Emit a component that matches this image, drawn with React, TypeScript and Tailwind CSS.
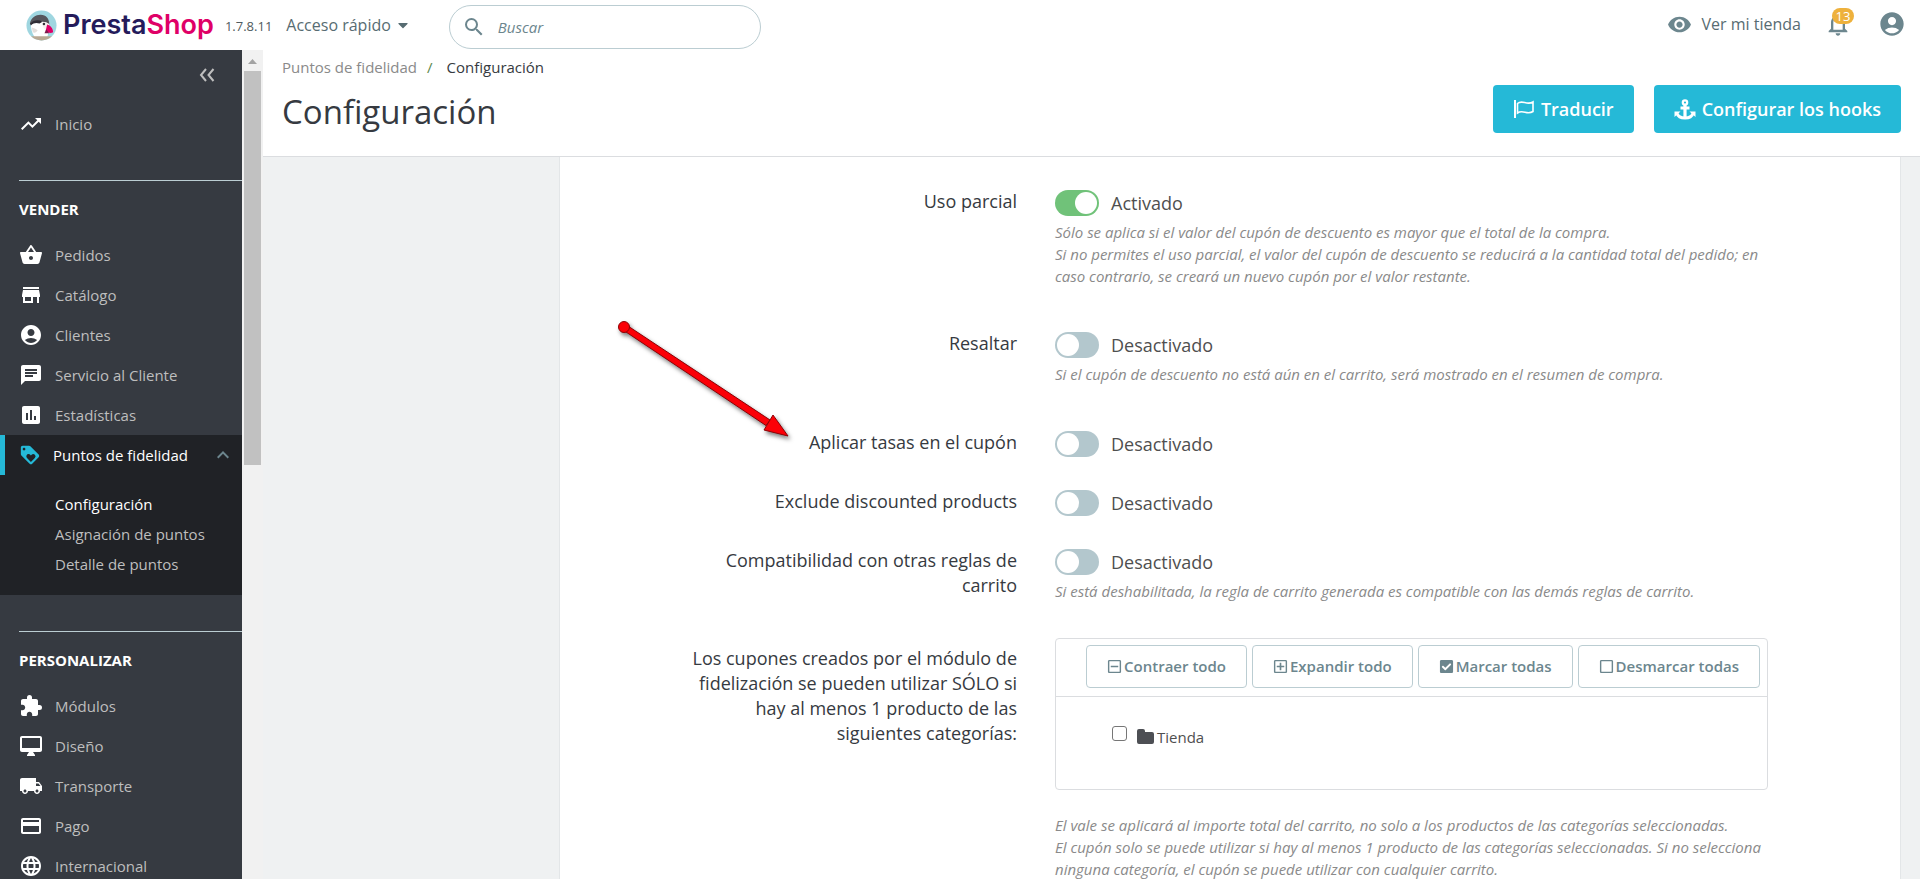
import React from 'react';
import {
  MdTrendingUp,
  MdShoppingBasket,
  MdStore,
  MdAccountCircle,
  MdChat,
  MdAssessment,
  MdLoyalty,
  MdExtension,
  MdLocalShipping,
  MdCreditCard,
  MdLanguage,
  MdSearch,
  MdVisibility,
  MdNotificationsNone,
  MdKeyboardArrowUp,
} from 'react-icons/md';
import { FaCaretDown, FaRegMinusSquare, FaRegPlusSquare, FaCheckSquare, FaRegSquare } from 'react-icons/fa';

const DesktopIcon = ({ className }: { className?: string }) => (
  <svg viewBox="0 0 24 24" className={className} fill="currentColor">
    <path d="M21 2H3c-1.100 0-2 .9-2 2v12c0 1.100.9 2 2 2h7l-2 3v1h8v-1l-2-3h7c1.100 0 2-.9 2-2V4c0-1.100-.9-2-2-2zm0 12H3V4h18v10z" />
  </svg>
);

const sections = [
  {
    title: 'VENDER',
    items: [
      { label: 'Pedidos', icon: MdShoppingBasket },
      { label: 'Catálogo', icon: MdStore },
      { label: 'Clientes', icon: MdAccountCircle },
      { label: 'Servicio al Cliente', icon: MdChat },
      { label: 'Estadísticas', icon: MdAssessment },
      {
        label: 'Puntos de fidelidad',
        icon: MdLoyalty,
        children: ['Configuración', 'Asignación de puntos', 'Detalle de puntos'],
      },
    ],
  },
  {
    title: 'PERSONALIZAR',
    items: [
      { label: 'Módulos', icon: MdExtension },
      { label: 'Diseño', icon: DesktopIcon },
      { label: 'Transporte', icon: MdLocalShipping },
      { label: 'Pago', icon: MdCreditCard },
      { label: 'Internacional', icon: MdLanguage },
    ],
  },
];

const Logo = () => (
  <a href="#" className="flex items-center gap-[6px]">
    <svg viewBox="0 0 32 32" className="w-[31px] h-[31px]">
      <clipPath id="logo-clip">
        <circle cx="16" cy="16" r="15.5" />
      </clipPath>
      <circle cx="16" cy="16" r="15.5" fill="#9fd6e0" />
      <g clipPath="url(#logo-clip)">
        <path d="M5 14c0 5 1 10 4 14h13l2-9-2-7-9-3z" fill="#fff" />
        <path d="M4 14c1-6 6-9 11-9 6 0 9 4 9 10-2-2-4-3-7-3-4-1-9-1-13 2z" fill="#56565c" />
        <path d="M4 14c4-4 9-4 13-2l-3 2c-3-1-6-1-9 2z" fill="#2f2d35" />
        <path d="M6 18c2 1 4 1 6 3-1 2-3 3-5 2z" fill="#e4dedb" />
        <path d="M17 13c3-1 6 0 7 2l-2 6c-3 0-5-3-5-8z" fill="#f6efee" />
        <circle cx="18.5" cy="14.500" r="1.300" fill="#35323a" />
        <path d="M22 15c3 1 6 4 6 8-2 1-5 1-8-1 1-2 1-5 2-7z" fill="#df0067" />
        <path d="M21 20l3 4-5 0z" fill="#7b1a4b" />
        <path d="M5 27h22v5H5z" fill="#b8a893" />
      </g>
    </svg>
    <span className="font-[Inter] font-semibold text-[27px] leading-8 text-[#251b5b]">
      Presta<span className="text-[#df0067]">Shop</span>
    </span>
  </a>
);

const Sidebar = () => (
  <nav className="w-[242px] shrink-0 bg-[#363a41] text-[15px] text-[#bebebe] overflow-hidden">
    <div className="flex justify-end pr-[26px] pt-4">
      <button aria-label="Contraer menú">
        <svg viewBox="0 0 18 18" className="w-[18px] h-[18px]" fill="none" stroke="#bebebe" strokeWidth="2">
          <path d="M8 3L3 9l5 6M15.500 3l-5 6 5 6" />
        </svg>
      </button>
    </div>
    <a href="#" className="flex items-center gap-3 pl-[19px] h-10 mt-5">
      <MdTrendingUp className="w-6 h-6 text-white" />
      Inicio
    </a>
    {sections.map((section) => (
      <div key={section.title} className="mt-9">
        <h2 className="ml-[19px] border-t border-[#bbcdd2] pt-4 pb-[14px] leading-6 font-bold text-white">
          {section.title}
        </h2>
        {section.items.map((item) => {
          const Icon = item.icon;
          if (item.children) {
            return (
              <div key={item.label} className="bg-[#202226] pb-4">
                <a href="#" className="flex items-center gap-3 h-10 pl-[14px] pr-[7px] border-l-[5px] border-[#25b9d7] text-white">
                  <Icon className="w-[22px] h-[22px] text-[#25b9d7]" />
                  <span className="flex-1">{item.label}</span>
                  <MdKeyboardArrowUp className="w-6 h-6 text-[#6c868e]" />
                </a>
                <ul className="pt-[14px] pl-[55px]">
                  {item.children.map((child, i) => (
                    <li key={child}>
                      <a href="#" className={i === 0 ? 'block py-1 leading-[22px] text-white' : 'block py-1 leading-[22px]'}>
                        {child}
                      </a>
                    </li>
                  ))}
                </ul>
              </div>
            );
          }
          return (
            <a href="#" key={item.label} className="flex items-center gap-3 h-10 pl-[19px]">
              <Icon className="w-6 h-6 text-white" />
              {item.label}
            </a>
          );
        })}
      </div>
    ))}
  </nav>
);

const Scrollbar = () => (
  <div className="w-[21px] shrink-0 bg-[#f1f1f1] flex flex-col items-center">
    <svg viewBox="0 0 17 21" className="w-[17px] h-[21px]">
      <path d="M4 14l4.500-5 4.500 5z" fill="#a3a3a3" />
    </svg>
    <div className="w-[17px] h-[394px] bg-[#c1c1c1]" />
  </div>
);

const TopBar = () => (
  <header className="relative z-10 h-[50px] bg-white flex items-start text-base text-[#576c72]">
    <div className="flex items-center h-[50px] pl-[26px]">
      <Logo />
      <span className="ml-[11px] mt-1 text-[13px] text-[#4f5b60]">1.7.8.11</span>
      <button className="ml-[14px] flex items-center gap-[6px]">
        Acceso rápido
        <FaCaretDown className="w-3" />
      </button>
    </div>
    <label className="ml-10 mt-[5px] w-[312px] h-11 flex items-center gap-3 pl-3 border border-[#bbcdd2] rounded-full bg-white">
      <MdSearch className="w-6 h-6 text-[#6c868e]" />
      <input
        type="text"
        aria-label="Buscar"
        placeholder="Buscar"
        className="w-56 bg-transparent outline-none text-[15px] italic placeholder:text-[#6c868e]"
      />
    </label>
    <div className="ml-auto flex items-center h-12 pr-[14px]">
      <a href="#" className="flex items-center gap-[10px]">
        <MdVisibility className="w-[25px] h-[25px] text-[#6c868e]" />
        Ver mi tienda
      </a>
      <button className="relative ml-[23px] text-[#6c868e]" aria-label="Notificaciones">
        <MdNotificationsNone className="w-7 h-7" />
        <span className="absolute -top-0.5 left-2 h-4 w-[22px] rounded-full bg-[#eeb13c] text-white text-[13px] leading-4 text-center">13</span>
      </button>
      <button className="ml-[26px] text-[#6c868e]" aria-label="Cuenta">
        <MdAccountCircle className="w-7 h-7" />
      </button>
    </div>
  </header>
);

const PageHead = () => (
  <div className="h-[107px] shrink-0 bg-white border-b border-[#dbdde0] pl-[19px] pr-[19px] flex items-start justify-between">
    <div>
      <div className="pt-[6px] flex text-[15px] leading-[22px]">
        <a href="#" className="text-[#8a8a8a]">Puntos de fidelidad</a>
        <span className="px-[10px] text-[#5d8a4c]">/</span>
        <span className="pl-1 text-[#363a41]">Configuración</span>
      </div>
      <h1 className="mt-3 text-[33px] leading-[44px] text-[#363a41]">Configuración</h1>
    </div>
    <div className="flex gap-5 mt-[35px] text-lg font-semibold text-white">
      <button className="h-12 px-5 flex items-center gap-[6px] rounded bg-[#25b9d7]">
        <svg viewBox="0 0 22 20" className="w-[22px] h-5" fill="none" stroke="currentColor" strokeWidth="1.600">
          <path d="M2 1v18" strokeWidth="2" />
          <path d="M4.500 4.500c5-4.500 9 2.500 15.500-1.500v9.500c-6 4-10-2.500-15.500 1.500z" />
        </svg>
        Traducir
      </button>
      <button className="h-12 px-5 flex items-center gap-[6px] rounded bg-[#25b9d7]">
        <svg viewBox="0 0 22 21" className="w-[22px] h-[21px]" fill="none" stroke="currentColor">
          <circle cx="11" cy="3.500" r="2.200" strokeWidth="2.200" />
          <path d="M11 6v13M6.500 9h9" strokeWidth="3.200" />
          <path d="M3 14.500c1 3 4 4.500 8 4.500s7-1.500 8-4.500" strokeWidth="3" />
          <path d="M.5 12.500h6l-6 5.500zM21.500 12.500h-6l6 5.500z" fill="currentColor" stroke="none" />
        </svg>
        Configurar los hooks
      </button>
    </div>
  </div>
);

const Switch = ({ id, on }: { id: string; on?: boolean }) => (
  <div className="flex items-center gap-3 h-[27px]">
    <input id={id} type="checkbox" role="switch" defaultChecked={on} className="peer sr-only" />
    <span className="w-11 h-[26px] rounded-full bg-[#b3c7cd] p-[2px] flex peer-checked:bg-[#70c279] peer-checked:justify-end">
      <span className="w-[22px] h-[22px] rounded-full bg-white" />
    </span>
    <span className="text-lg text-[#4f4f4f]">{on ? 'Activado' : 'Desactivado'}</span>
  </div>
);

const Help = ({ children }: { children: React.ReactNode }) => (
  <p className="text-[15px] leading-[22px] italic text-[#8a8a8a]">{children}</p>
);

type RowProps = { label: string; id: string; padded?: boolean; children: React.ReactNode };

const Row = ({ label, id, padded, children }: RowProps) => (
  <div className="grid grid-cols-[1fr_713px] gap-[38px]">
    <div className={padded ? 'justify-self-end w-[336px] text-right pt-2' : 'justify-self-end w-[336px] text-right'}>
      <label htmlFor={id} className="block text-lg leading-[25px] text-[#363a41]">
        {label}
      </label>
    </div>
    <div>{children}</div>
  </div>
);

const treeButtons = [
  { label: 'Contraer todo', icon: FaRegMinusSquare },
  { label: 'Expandir todo', icon: FaRegPlusSquare },
  { label: 'Marcar todas', icon: FaCheckSquare },
  { label: 'Desmarcar todas', icon: FaRegSquare },
];

const CategoryTree = () => (
  <div className="border border-[#dbdde0] rounded">
    <div className="flex justify-end gap-[5px] pt-[6px] pb-2 pr-[7px] border-b border-[#dbdde0]">
      {treeButtons.map(({ label, icon: Icon }) => (
        <button
          key={label}
          className="h-[43px] px-5 flex items-center gap-[2px] border border-[#bbcdd2] rounded text-[15px] font-semibold text-[#6c868e]"
        >
          <Icon className="w-[15px] h-[15px]" />
          {label}
        </button>
      ))}
    </div>
    <div className="h-[92px] pt-7 pl-14 flex items-start text-[15px] leading-6 text-[#4f4f4f]">
      <input
        id="categorias"
        type="checkbox"
        className="appearance-none w-[15px] h-[15px] mt-px border border-[#767676] rounded-[3px]"
      />
      <label htmlFor="categorias" className="flex items-center gap-[2px] ml-[10px]">
        <svg viewBox="0 0 18 16" className="w-[18px] h-4">
          <path d="M0 2q0-2 2-2h4q2 0 2 2v1h7q2 0 2 2v8q0 2-2 2H2q-2 0-2-2z" fill="#4d4f54" />
        </svg>
        Tienda
      </label>
    </div>
  </div>
);

const Arrow = () => (
  <svg viewBox="0 0 190 130" className="absolute left-[50px] top-[156px] w-[190px] h-[130px] drop-shadow-[2px_3px_2px_rgba(0,0,0,0.5)]">
    <g fill="#fb0007" stroke="#8d0005" strokeWidth="1">
      <path d="M15.700 11.500L160 107l-4 5.500L12.300 16.500z" />
      <path d="M163 102l15 21-24-6z" />
      <circle cx="14" cy="14" r="5.500" />
    </g>
  </svg>
);

const App = () => {
  return (
    <div className="h-screen flex flex-col overflow-hidden bg-white font-['Open_Sans',sans-serif]">
      <TopBar />
      <div className="flex flex-1 min-h-0">
        <Sidebar />
        <Scrollbar />
        <main className="flex-1 min-w-0 flex flex-col bg-[#eff1f2]">
          <PageHead />
          <div className="flex-1 min-h-0 overflow-hidden pl-[296px] pr-[19px]">
            <div className="relative min-h-full bg-white border-x border-[#e3e6e8] pl-5 pr-[132px] pt-8 pb-10">
              <Arrow />
              <Row label="Uso parcial" id="uso">
                <Switch id="uso" on />
                <div className="pt-[5px] pb-11">
                  <Help>Sólo se aplica si el valor del cupón de descuento es mayor que el total de la compra.</Help>
                  <Help>
                    Si no permites el uso parcial, el valor del cupón de descuento se reducirá a la cantidad total del pedido; en
                    caso contrario, se creará un nuevo cupón por el valor restante.
                  </Help>
                </div>
              </Row>
              <Row label="Resaltar" id="resaltar">
                <Switch id="resaltar" />
                <div className="pt-[5px] pb-[45px]">
                  <Help>Si el cupón de descuento no está aún en el carrito, será mostrado en el resumen de compra.</Help>
                </div>
              </Row>
              <Row label="Aplicar tasas en el cupón" id="tasas">
                <div className="pb-8">
                  <Switch id="tasas" />
                </div>
              </Row>
              <Row label="Exclude discounted products" id="exclude">
                <div className="pb-8">
                  <Switch id="exclude" />
                </div>
              </Row>
              <Row label="Compatibilidad con otras reglas de carrito" id="compat">
                <Switch id="compat" />
                <div className="pt-[5px] pb-9">
                  <Help>Si está deshabilitada, la regla de carrito generada es compatible con las demás reglas de carrito.</Help>
                </div>
              </Row>
              <Row
                label="Los cupones creados por el módulo de fidelización se pueden utilizar SÓLO si hay al menos 1 producto de las siguientes categorías:"
                id="categorias"
                padded
              >
                <CategoryTree />
                <div className="pt-6">
                  <Help>El vale se aplicará al importe total del carrito, no solo a los productos de las categorías seleccionadas.</Help>
                  <Help>
                    El cupón solo se puede utilizar si hay al menos 1 producto de las categorías seleccionadas. Si no selecciona
                    ninguna categoría, el cupón se puede utilizar con cualquier carrito.
                  </Help>
                </div>
              </Row>
            </div>
          </div>
        </main>
      </div>
    </div>
  );
};

export default App;
